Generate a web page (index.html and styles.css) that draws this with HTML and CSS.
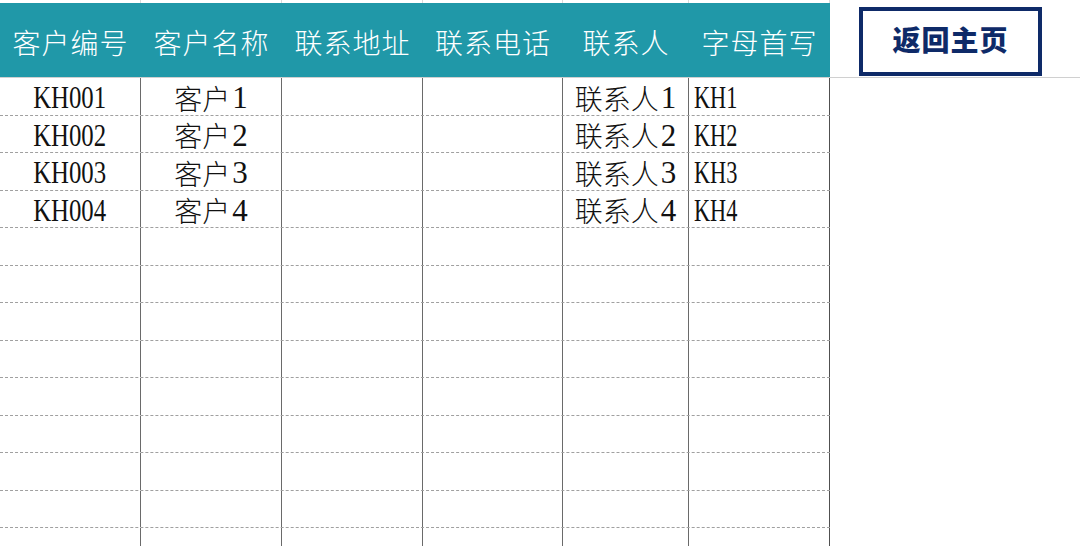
FILE: index.html
```html
<!DOCTYPE html>
<html lang="zh-CN">
<head>
<meta charset="utf-8">
<link rel="stylesheet" href="styles.css">
</head>
<body>
<div class="sheet">
  <div class="table">
    <div class="strip">
      <div class="sc"></div><div class="sc"></div><div class="sc"></div><div class="sc"></div><div class="sc"></div><div class="sc last"></div>
    </div>
    <div class="head">
      <div class="hc">客户编号</div>
      <div class="hc">客户名称</div>
      <div class="hc">联系地址</div>
      <div class="hc">联系电话</div>
      <div class="hc">联系人</div>
      <div class="hc">字母首写</div>
    </div>
    <div class="body">
      <div class="row"><div class="c ctr"><span class="lat">KH001</span></div><div class="c ctr">客户<span class="num">1</span></div><div class="c"></div><div class="c"></div><div class="c ctr">联系人<span class="num">1</span></div><div class="c left"><span class="lat">KH1</span></div></div>
      <div class="row"><div class="c ctr"><span class="lat">KH002</span></div><div class="c ctr">客户<span class="num">2</span></div><div class="c"></div><div class="c"></div><div class="c ctr">联系人<span class="num">2</span></div><div class="c left"><span class="lat">KH2</span></div></div>
      <div class="row"><div class="c ctr"><span class="lat">KH003</span></div><div class="c ctr">客户<span class="num">3</span></div><div class="c"></div><div class="c"></div><div class="c ctr">联系人<span class="num">3</span></div><div class="c left"><span class="lat">KH3</span></div></div>
      <div class="row"><div class="c ctr"><span class="lat">KH004</span></div><div class="c ctr">客户<span class="num">4</span></div><div class="c"></div><div class="c"></div><div class="c ctr">联系人<span class="num">4</span></div><div class="c left"><span class="lat">KH4</span></div></div>
      <div class="row"><div class="c"></div><div class="c"></div><div class="c"></div><div class="c"></div><div class="c"></div><div class="c"></div></div>
      <div class="row"><div class="c"></div><div class="c"></div><div class="c"></div><div class="c"></div><div class="c"></div><div class="c"></div></div>
      <div class="row"><div class="c"></div><div class="c"></div><div class="c"></div><div class="c"></div><div class="c"></div><div class="c"></div></div>
      <div class="row"><div class="c"></div><div class="c"></div><div class="c"></div><div class="c"></div><div class="c"></div><div class="c"></div></div>
      <div class="row"><div class="c"></div><div class="c"></div><div class="c"></div><div class="c"></div><div class="c"></div><div class="c"></div></div>
      <div class="row"><div class="c"></div><div class="c"></div><div class="c"></div><div class="c"></div><div class="c"></div><div class="c"></div></div>
      <div class="row"><div class="c"></div><div class="c"></div><div class="c"></div><div class="c"></div><div class="c"></div><div class="c"></div></div>
      <div class="row"><div class="c"></div><div class="c"></div><div class="c"></div><div class="c"></div><div class="c"></div><div class="c"></div></div>
      <div class="row"><div class="c"></div><div class="c"></div><div class="c"></div><div class="c"></div><div class="c"></div><div class="c"></div></div>
    </div>
  </div>
  <div class="side">
    <div class="side-strip"></div>
    <div class="side-head">
      <div class="home-btn">返回主页</div>
    </div>
  </div>
</div>
</body>
</html>
```

FILE: styles.css
```css
html, body {
  margin: 0;
  padding: 0;
  background: #ffffff;
  overflow: hidden;
}
body {
  width: 1080px;
  height: 546px;
  font-family: "Liberation Serif", "Noto Sans CJK SC", serif;
}
.sheet {
  display: flex;
  align-items: flex-start;
  width: 1080px;
  height: 546px;
  overflow: hidden;
}
.table {
  width: 830px;
  flex-shrink: 0;
  display: flex;
  flex-direction: column;
}
.strip, .head, .row {
  display: grid;
  grid-template-columns: 141px 141px 141px 140px 126px 141px;
  flex-shrink: 0;
}
.strip {
  height: 3px;
}
.sc {
  border-right: 1px solid #dadada;
}
.head {
  height: 74px;
  background: #2098a8;
  border-bottom: 1px solid #d0d0d0;
  box-sizing: content-box;
}
.hc {
  display: flex;
  align-items: center;
  justify-content: center;
  color: #ffffff;
  font-family: "Noto Sans CJK SC", sans-serif;
  font-weight: 300;
  font-size: 28px;
  letter-spacing: 1px;
  padding-top: 4px;
  box-sizing: border-box;
}
.body {
  display: flex;
  flex-direction: column;
}
.row {
  height: 37.5px;
  box-sizing: border-box;
  border-bottom: 1px dashed #a0a0a0;
}
.c {
  border-right: 1px solid #6a6a6a;
  display: flex;
  align-items: center;
  font-size: 28px;
  font-weight: 300;
  color: #111111;
  line-height: 1;
  padding-top: 3px;
  box-sizing: border-box;
  white-space: nowrap;
  font-family: "Noto Sans CJK SC", sans-serif;
}
.c:last-child {
  border-right-color: #505050;
}
.c.ctr {
  justify-content: center;
}
.c.left {
  padding-left: 5px;
}
.lat, .num {
  font-family: "Liberation Serif", serif;
  font-weight: 400;
  font-size: 31px;
  display: inline-block;
}
.lat {
  transform: scaleX(0.8);
  transform-origin: center;
  margin: 0 -9px;
}
.c.left .lat {
  transform: scaleX(0.72);
  transform-origin: left center;
  margin: 0;
}
.num {
  margin-left: 2px;
}
.side {
  flex: 1;
  display: flex;
  flex-direction: column;
}
.side-strip {
  height: 3px;
  flex-shrink: 0;
}
.side-head {
  height: 74px;
  flex-shrink: 0;
  border-bottom: 1px solid #d0d0d0;
  box-sizing: content-box;
  display: flex;
  align-items: flex-start;
  padding-left: 29px;
}
.home-btn {
  margin-top: 4px;
  width: 183px;
  height: 69px;
  box-sizing: border-box;
  border: 4px solid #0e2a68;
  display: flex;
  align-items: center;
  justify-content: center;
  color: #0e2a68;
  font-family: "Noto Sans CJK SC", sans-serif;
  font-weight: 900;
  font-size: 28px;
  letter-spacing: 1px;
  padding-bottom: 6px;
}
```
